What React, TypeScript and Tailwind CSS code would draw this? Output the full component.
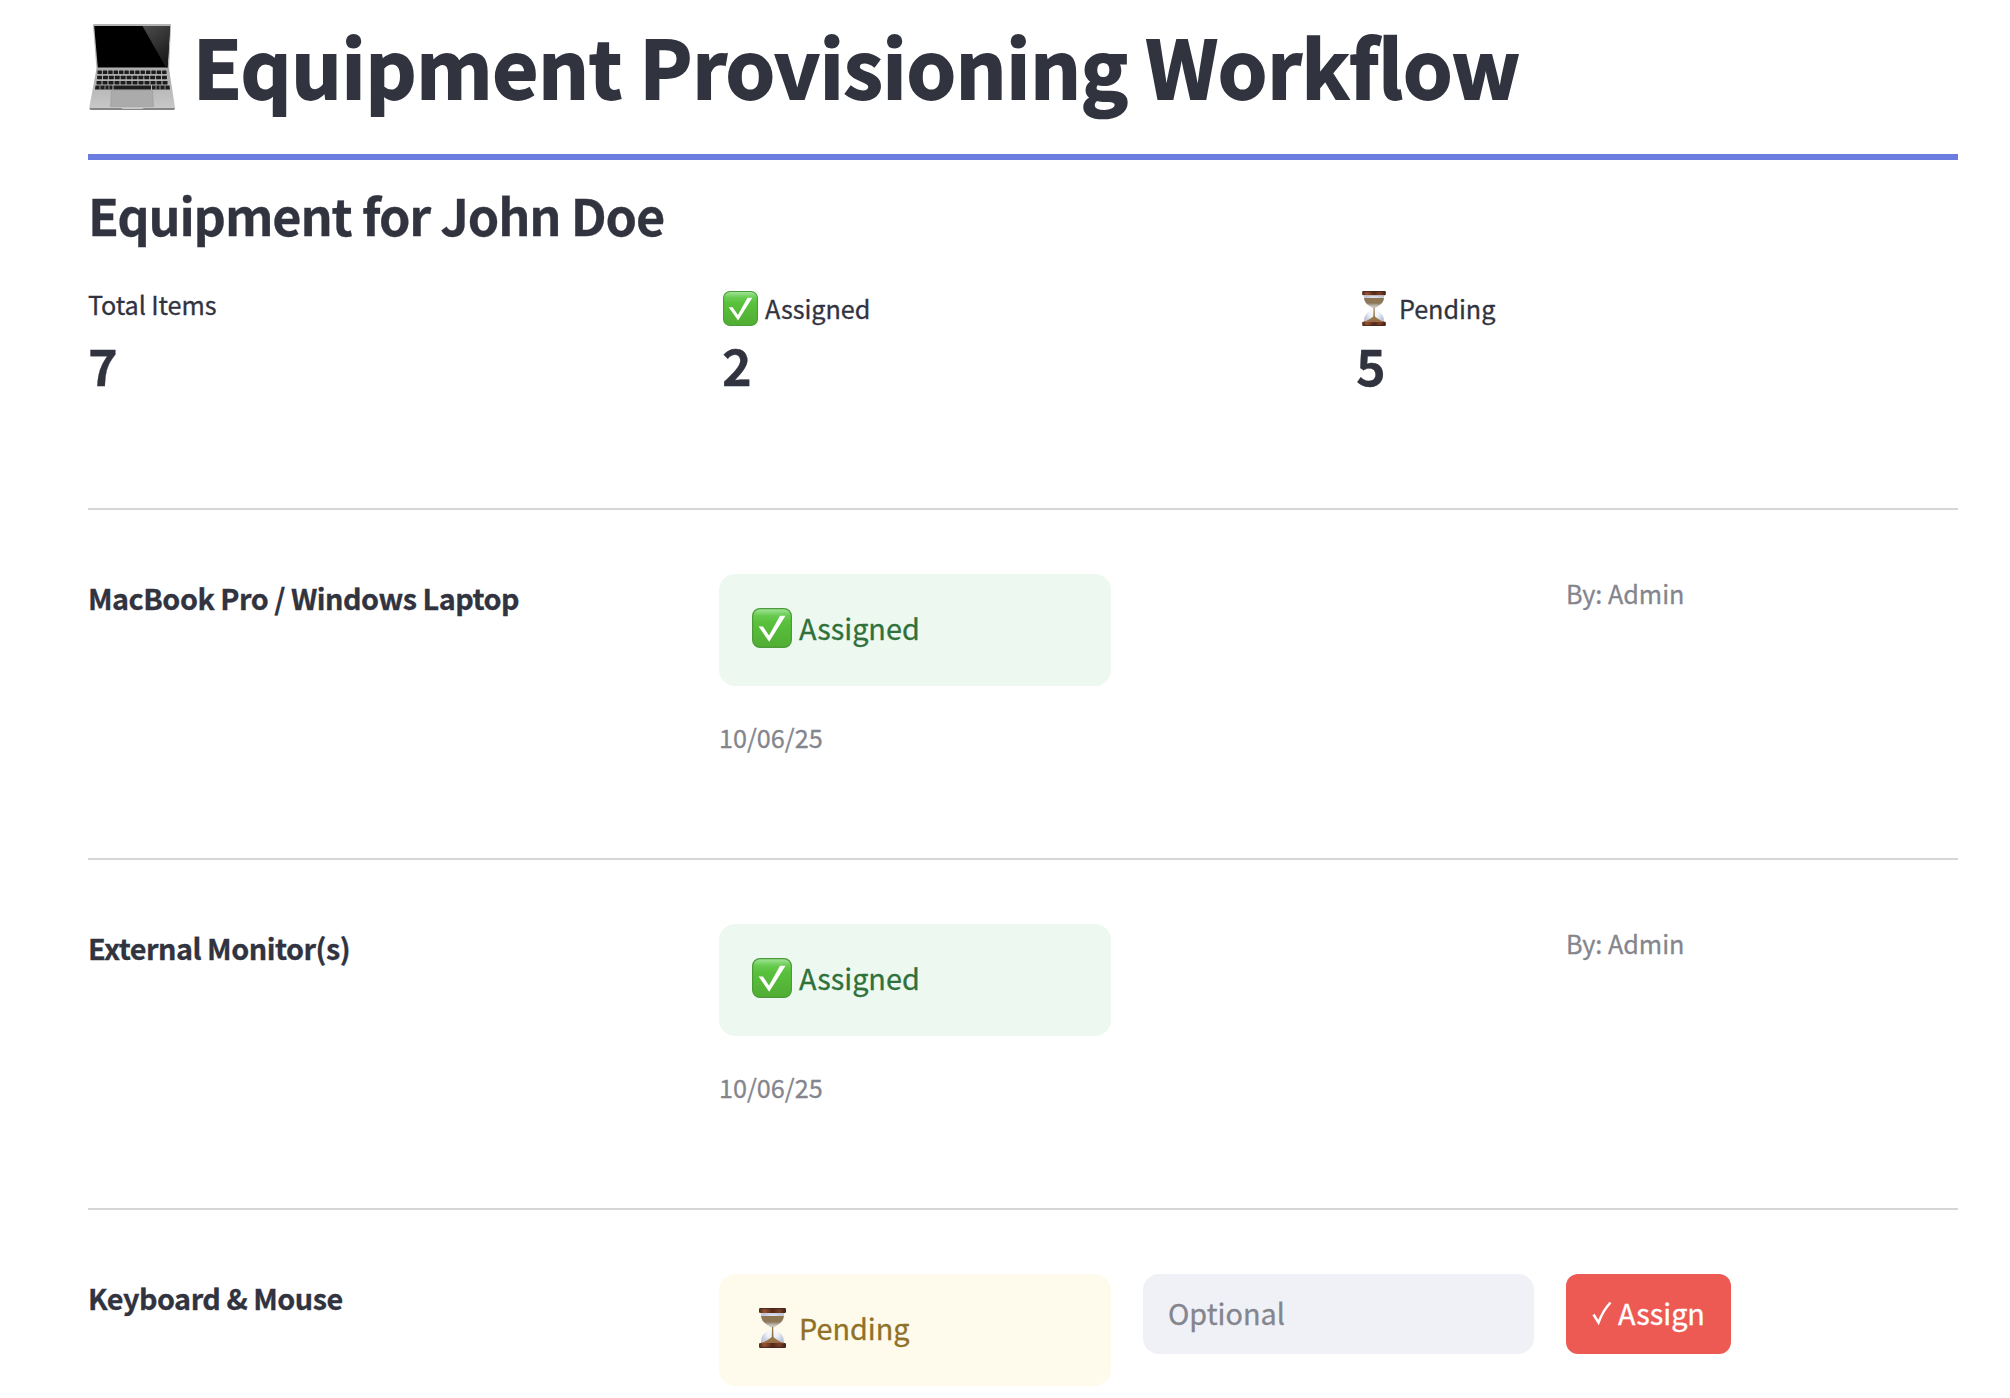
import React from "react";

function Laptop() {
  const rows = [
    { y: 46.5, x0: 7, n: 13 },
    { y: 51.8, x0: 6.6, n: 12 },
    { y: 57, x0: 6, n: 12 },
  ];
  return (
    <svg viewBox="0 0 86 88" className="ml-px h-[88px] w-[86px] shrink-0" aria-label="laptop">
      <defs>
        <linearGradient id="lapBase" x1="0" y1="0" x2="0" y2="1">
          <stop offset="0" stopColor="#a9a9a9" />
          <stop offset="1" stopColor="#c9c9c9" />
        </linearGradient>
        <linearGradient id="lapGlare" x1="0" y1="0" x2="0.5" y2="1">
          <stop offset="0" stopColor="#4d4d4d" />
          <stop offset="1" stopColor="#1b1b1b" />
        </linearGradient>
      </defs>
      <path d="M4 1.200 Q4 0 5.200 0 H80.800 Q82.200 0 82.100 1.200 L80 45 H7.500 Z" fill="#b4b4b2" />
      <path d="M5.200 2 H81 L78.600 43.500 H8.800 Z" fill="#000" />
      <path d="M53.500 2 H81 L78.600 43.500 H77 Z" fill="url(#lapGlare)" />
      <path d="M7.500 44.500 H80 L86 83.500 Q86 86 83.500 86 H2.500 Q0 86 0.300 83.500 Z" fill="url(#lapBase)" />
      <g fill="#1d1d1d">
        {rows.map((r) =>
          Array.from({ length: r.n }, (_, i) => {
            const left = r.x0 + 1.5;
            const step = (87 - 2 * left) / r.n;
            return <rect key={`${r.y}-${i}`} x={left + i * step} y={r.y} width={step - 1} height="3.500" rx="0.500" />;
          })
        )}
        <path d="M6.500 61.500 H23.500 V65.500 H6 Z" />
        <path d="M24.500 61.500 H62 V65.500 H24.500 Z" />
        <path d="M63 61.500 H80.500 L81 65.500 H63 Z" />
      </g>
      <path d="M11 61.500V65.500M16 61.500V65.500M20 61.500V65.500M67 61.500V65.500M71 61.500V65.500M76 61.500V65.500" stroke="#aaa" strokeWidth="0.800" />
      <path d="M22.500 66.500 H63.500 L64.500 82.500 H21.500 Z" fill="#ababab" stroke="#999" strokeWidth="0.600" />
      <path d="M0.500 84 H32 L34 85 H53 L55 84 H86 L85 86 H1.500 Z" fill="#858585" />
    </svg>
  );
}

function CheckEmoji({ className }: { className: string }) {
  return (
    <svg viewBox="0 0 40 40" className={className} aria-label="assigned">
      <defs>
        <linearGradient id="chk" x1="0" y1="0" x2="0" y2="1">
          <stop offset="0" stopColor="#a6e69d" />
          <stop offset="0.180" stopColor="#68cb50" />
          <stop offset="0.350" stopColor="#59c13c" />
          <stop offset="1" stopColor="#50ad33" />
        </linearGradient>
      </defs>
      <rect x="0.600" y="0.600" width="38.800" height="38.800" rx="7.500" fill="url(#chk)" stroke="#4b9c38" strokeWidth="1.200" />
      <path d="M6.600 18.600 H11 L17 27.500 L28 7.800 H33.500 L17.200 33.800 Z" fill="#fff" />
    </svg>
  );
}

function HourglassEmoji({ className }: { className: string }) {
  return (
    <svg viewBox="0 0 27 40" className={className} aria-label="pending">
      <defs>
        <linearGradient id="wood" x1="0" y1="0" x2="1" y2="0">
          <stop offset="0" stopColor="#4d2b1c" />
          <stop offset="0.200" stopColor="#965433" />
          <stop offset="0.500" stopColor="#54291a" />
          <stop offset="0.750" stopColor="#7c4026" />
          <stop offset="1" stopColor="#3f2115" />
        </linearGradient>
        <linearGradient id="sand" x1="0" y1="0" x2="0" y2="1">
          <stop offset="0" stopColor="#8f7650" />
          <stop offset="0.500" stopColor="#8d7858" />
          <stop offset="0.800" stopColor="#c4bfb8" />
          <stop offset="1" stopColor="#c9c6c2" />
        </linearGradient>
        <radialGradient id="glass" cx="0.500" cy="0.500" r="0.550">
          <stop offset="0" stopColor="#fff" />
          <stop offset="0.600" stopColor="#eef0f7" />
          <stop offset="1" stopColor="#c3c9dc" />
        </radialGradient>
      </defs>
      <path d="M2 5 H25 C26 13 20 17 15 19.500 V21 C21 23 25.500 28 25 35 H2 C1.500 28 6 23 12 21 V19.500 C7 17 1 13 2 5 Z" fill="url(#glass)" />
      <path d="M2.200 8 H24.800 C24.500 14 19 17 14.500 19.500 H12.500 C8 17 2.500 14 2.200 8 Z" fill="url(#sand)" />
      <path d="M13 19 H14.200 L14.500 29 C17 31.500 21 33 23 35 H4 C6 33 10 31.500 12.700 29 Z" fill="#957748" />
      <rect x="0" y="0" width="27" height="4.900" rx="1.200" fill="url(#wood)" />
      <rect x="0" y="35" width="27" height="5" rx="1.200" fill="url(#wood)" />
      <path d="M1 0.700 H26 M1 39.300 H26" stroke="#43251a" strokeWidth="0.900" />
      <path d="M2 35 Q13.500 32.500 25 35" fill="none" stroke="#a5623c" strokeWidth="0.900" />
    </svg>
  );
}

function Metric({ label, value, icon }: { label: string; value: string; icon?: React.ReactNode }) {
  return (
    <div className="flex flex-col">
      <div className={icon ? "flex h-[51px] items-start pt-[10px]" : "flex h-[51px] items-start pt-[8px]"}>
        {icon}
        <span className={icon ? "text-[25.2px] leading-9 tracking-[-0.05px]" : "text-[25.2px] leading-8 tracking-[-0.1px]"}>{label}</span>
      </div>
      <div className="text-[50.4px] font-bold leading-[68px]">{value}</div>
    </div>
  );
}

function ItemName({ children }: { children: React.ReactNode }) {
  return <div className="text-[28.8px] font-bold leading-[47px] tracking-[-0.5px]">{children}</div>;
}

function AssignedRow({ name }: { name: string }) {
  return (
    <div className="grid h-[350px] grid-cols-[599px_392px_391px_392px] gap-x-8 border-t-2 border-[#d6d6d9] pt-16">
      <ItemName>{name}</ItemName>
      <div>
        <div className="flex h-28 items-center rounded-2xl bg-[#edf9f0] pl-[33px]">
          <CheckEmoji className="mb-[4px] size-10" />
          <span className="mb-[5px] ml-[7px] text-[28.8px] leading-[48px] text-[#30713b]">Assigned</span>
        </div>
        <div className="mt-[30px] text-[25.2px] leading-[42px] text-[#84858d]">10/06/25</div>
      </div>
      <div />
      <div className="text-[25.2px] leading-[39px] text-[#84858d]">By: Admin</div>
    </div>
  );
}

export default function App() {
  return (
    <div className="h-[1398px] w-[2010px] overflow-hidden bg-white pl-[88px] pr-[52px] text-[#31333f] [-webkit-text-stroke:0.3px] [font-family:'Noto_Sans_CJK_SC',sans-serif]">
      <header className="flex h-40 items-start border-b-[6px] border-[#6b7de0] pt-[24px]">
        <Laptop />
        <h1 className="-mt-[6px] ml-[18px] whitespace-nowrap text-[79.2px] font-bold leading-[94px] tracking-[-0.21px] [-webkit-text-stroke:1.8px]">Equipment Provisioning Workflow</h1>
      </header>
      <h2 className="h-[120px] pt-[21px] text-[50.4px] font-bold leading-[68px] tracking-[-1.16px]">Equipment for John Doe</h2>
      <section className="grid h-[228px] grid-cols-3 gap-8">
        <Metric label="Total Items" value="7" />
        <Metric label="Assigned" value="2" icon={<CheckEmoji className="mt-[1px] mr-[7px] ml-px size-[35px]" />} />
        <Metric label="Pending" value="5" icon={<HourglassEmoji className="mt-[1px] mr-[13px] ml-[6px] h-[35px] w-[24px]" />} />
      </section>
      <AssignedRow name="MacBook Pro / Windows Laptop" />
      <AssignedRow name="External Monitor(s)" />
      <div className="grid h-[350px] grid-cols-[599px_392px_391px_392px] gap-x-8 border-t-2 border-[#d6d6d9] pt-16">
        <ItemName>Keyboard &amp; Mouse</ItemName>
        <div className="flex h-28 items-center rounded-2xl bg-[#fffbec] pl-[40px]">
          <HourglassEmoji className="mb-[4px] h-10 w-[27px]" />
          <span className="mb-[5px] ml-[13px] text-[28.8px] leading-[48px] text-[#8f7127]">Pending</span>
        </div>
        <input
          placeholder="Optional"
          className="h-20 w-full rounded-2xl bg-[#f0f1f6] px-[25px] pb-[3px] text-[28.8px] placeholder:text-[#84858d]"
        />
        <button className="flex h-20 w-[165px] items-center rounded-xl bg-[#ed5a54] pb-[2px] pl-[26px] text-[28.8px] text-white">
          <svg viewBox="0 0 20 24" className="h-6 w-5" aria-hidden="true">
            <path d="M1.500 13.500 L6.500 21.500 Q11 9.500 18.500 1.500" fill="none" stroke="white" strokeWidth="2.500" />
          </svg>
          <span className="ml-[6px]">Assign</span>
        </button>
      </div>
    </div>
  );
}
